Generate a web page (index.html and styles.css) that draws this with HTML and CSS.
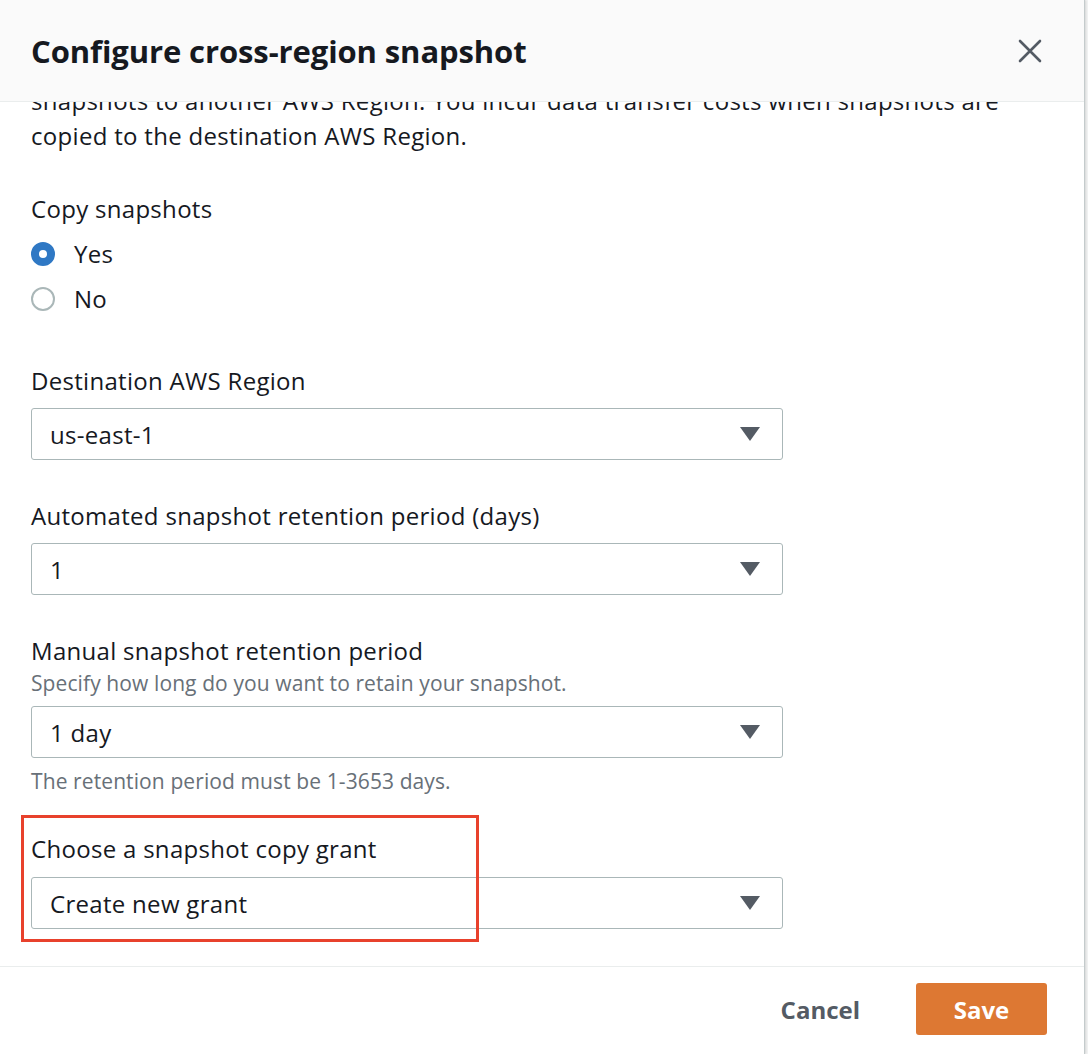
FILE: index.html
```html
<!DOCTYPE html>
<html lang="en">
<head>
<meta charset="utf-8">
<title>Configure cross-region snapshot</title>
<link rel="stylesheet" href="styles.css">
</head>
<body>
<div class="modal">
  <header class="modal-header">
    <h1 class="modal-title">Configure cross-region snapshot</h1>
    <button class="close-btn" aria-label="Close">
      <svg width="24" height="24" viewBox="0 0 24 24"><path d="M2 2 L22 22 M22 2 L2 22" stroke="#545b64" stroke-width="2.6" stroke-linecap="round" fill="none"/></svg>
    </button>
  </header>
  <div class="modal-body">
    <div class="body-inner">
      <p class="intro">snapshots to another AWS Region. You incur data transfer costs when snapshots are copied to the destination AWS Region.</p>

      <div class="field field-radio">
        <div class="label">Copy snapshots</div>
        <div class="radio-group">
          <label class="radio-row"><span class="radio checked"></span><span>Yes</span></label>
          <label class="radio-row"><span class="radio"></span><span>No</span></label>
        </div>
      </div>

      <div class="field">
        <div class="label">Destination AWS Region</div>
        <div class="select"><span>us-east-1</span><span class="caret"></span></div>
      </div>

      <div class="field">
        <div class="label">Automated snapshot retention period (days)</div>
        <div class="select"><span>1</span><span class="caret"></span></div>
      </div>

      <div class="field">
        <div class="label">Manual snapshot retention period</div>
        <div class="desc">Specify how long do you want to retain your snapshot.</div>
        <div class="select"><span>1 day</span><span class="caret"></span></div>
        <div class="hint">The retention period must be 1-3653 days.</div>
      </div>

      <div class="field field-grant">
        <div class="highlight"></div>
        <div class="label">Choose a snapshot copy grant</div>
        <div class="select"><span>Create new grant</span><span class="caret"></span></div>
      </div>
    </div>
  </div>
  <footer class="modal-footer">
    <button class="btn btn-link">Cancel</button>
    <button class="btn btn-primary">Save</button>
  </footer>
</div>
</body>
</html>
```

FILE: styles.css
```css
html, body {
  margin: 0;
  padding: 0;
}
body {
  width: 1088px;
  height: 1054px;
  overflow: hidden;
  background: #f2f3f3;
  font-family: "Open Sans", "Noto Sans", sans-serif;
  color: #16191f;
}
.modal {
  width: 1084px;
  height: 1054px;
  background: #fff;
  border-right: 1px solid #c4cbcc;
  box-shadow: 1px 0 2px rgba(0,0,0,0.12);
  display: flex;
  flex-direction: column;
}
.modal-header {
  height: 101px;
  flex: none;
  background: #fafafa;
  border-bottom: 1px solid #eaeded;
  display: flex;
  align-items: center;
  justify-content: space-between;
  padding: 0 42px 0 31px;
  box-sizing: content-box;
}
.modal-title {
  margin: 0;
  font-size: 31px;
  font-weight: 700;
  color: #16191f;
  letter-spacing: -0.1px;
}
.close-btn {
  border: none;
  background: none;
  padding: 0;
  width: 24px;
  height: 24px;
  display: flex;
}
.modal-body {
  flex: none;
  height: 864px;
  overflow: hidden;
  border-bottom: 1px solid #eaeded;
}
.body-inner {
  padding: 0 31px;
  margin-top: -19px;
}
.intro {
  margin: 0;
  font-size: 24px;
  letter-spacing: 0.3px;
  line-height: 35px;
  max-width: 990px;
}
.field {
  width: 752px;
  display: flex;
  flex-direction: column;
}
.field-radio {
  margin-top: 39px;
}
.field + .field {
  margin-top: 39px;
}
.label {
  font-size: 24px;
  letter-spacing: 0.3px;
  line-height: 34px;
  white-space: nowrap;
}
.radio-group {
  display: flex;
  flex-direction: column;
  gap: 11px;
  margin-top: 11px;
}
.radio-row {
  display: flex;
  align-items: center;
  gap: 19px;
  font-size: 24px;
  letter-spacing: 0.3px;
  line-height: 34px;
}
.radio {
  width: 24px;
  height: 24px;
  border-radius: 50%;
  border: 2px solid #aab7b8;
  box-sizing: border-box;
  background: #fff;
}
.radio.checked {
  border: 8px solid #2f78c4;
}
.field-radio + .field {
  margin-top: 48px;
}
.select {
  margin-top: 10px;
  height: 52px;
  box-sizing: border-box;
  border: 1px solid #aab7b8;
  border-radius: 3px;
  display: flex;
  align-items: center;
  justify-content: space-between;
  padding: 0 22px 0 18px;
  font-size: 24px;
  letter-spacing: 0.3px;
}
.caret {
  width: 0;
  height: 0;
  border-left: 10px solid transparent;
  border-right: 10px solid transparent;
  border-top: 14px solid #545b64;
}
.desc {
  font-size: 21px;
  letter-spacing: 0.1px;
  line-height: 28px;
  color: #687078;
  margin-top: 1px;
}
.desc + .select {
  margin-top: 9px;
}
.hint {
  font-size: 21px;
  letter-spacing: 0.1px;
  line-height: 28px;
  color: #687078;
  margin-top: 9px;
}
.field + .field-grant {
  position: relative;
  margin-top: 37px;
}
.field-grant .select {
  margin-top: 11px;
}
.highlight {
  position: absolute;
  left: -10px;
  top: -17px;
  width: 458px;
  height: 127px;
  border: 3px solid #e8412c;
  box-sizing: border-box;
  pointer-events: none;
}
.modal-footer {
  flex: 1;
  display: flex;
  justify-content: flex-end;
  align-items: flex-start;
  padding: 16px 37px 0 0;
  gap: 28px;
}
.btn {
  font-family: "Open Sans", "Noto Sans", sans-serif;
  font-weight: 700;
  font-size: 24px;
  border: none;
  height: 52px;
  border-radius: 3px;
  cursor: pointer;
}
.btn-link {
  background: none;
  color: #545b64;
  padding: 0 28px;
}
.btn-primary {
  background: #dd7833;
  color: #fff;
  width: 131px;
}
```
